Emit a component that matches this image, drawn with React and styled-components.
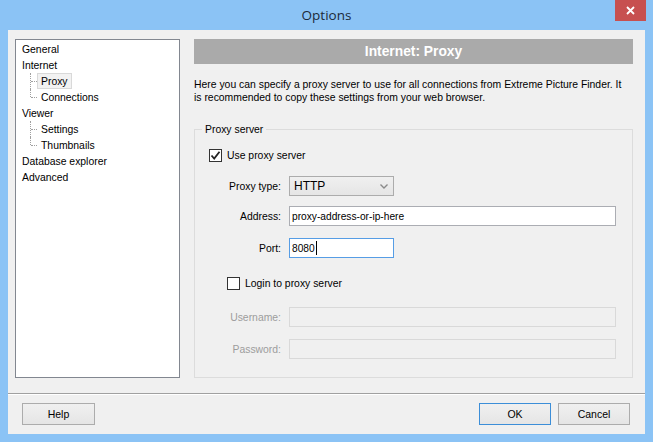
import React from "react";
import styled, { createGlobalStyle } from "styled-components";

const GlobalStyle = createGlobalStyle`
  html, body { margin: 0; padding: 0; background: #8bc3f5; }
  body { font-family: "Liberation Sans", Arial, sans-serif; font-size: 10.4px; color: #000; }
  * { box-sizing: border-box; }
`;

const Window = styled.div`
  width: 653px;
  height: 442px;
  background: #8bc3f5;
  display: flex;
  flex-direction: column;
`;

const TitleBar = styled.div`
  height: 30px;
  display: grid;
  grid-template-columns: 1fr auto 1fr;
  align-items: start;
`;

const Title = styled.div`
  grid-column: 2;
  font-family: "Open Sans", "Noto Sans", sans-serif;
  font-size: 13.5px;
  line-height: 30px;
  color: #1b2a3a;
`;

const CloseButton = styled.div`
  grid-column: 3;
  justify-self: end;
  margin-right: 7px;
  width: 31px;
  height: 21px;
  background: #c75050;
  display: flex;
  align-items: center;
  justify-content: center;
`;

const Client = styled.div`
  flex: 1;
  margin: 0 8px 8px 8px;
  background: #f0f0f0;
  display: flex;
  flex-direction: column;
`;

const Main = styled.div`
  display: flex;
  gap: 14px;
  padding: 9px 12px 0 7px;
  height: 348px;
`;

const Tree = styled.div`
  width: 165px;
  height: 339px;
  background: #fff;
  border: 1px solid #828790;
  padding-top: 1px;
`;

const TreeRow = styled.div`
  position: relative;
  height: 16px;
  display: flex;
  align-items: center;
  padding-left: ${(p) => (p.$level ? 21 : 2)}px;

  ${(p) =>
    p.$level
      ? `
    &::before {
      content: "";
      position: absolute;
      left: 14px;
      top: 0;
      height: ${p.$last ? "8px" : "16px"};
      border-left: 1px dotted #a0a0a0;
    }
    &::after {
      content: "";
      position: absolute;
      left: 15px;
      top: 8px;
      width: 6px;
      border-top: 1px dotted #a0a0a0;
    }
  `
      : ""}
`;

const TreeLabel = styled.span`
  display: inline-flex;
  align-items: center;
  height: 16px;
  padding: 0 3px;
  border: 1px solid ${(p) => (p.$selected ? "#d9d9d9" : "transparent")};
  background: ${(p) => (p.$selected ? "#f2f2f2" : "transparent")};
  white-space: nowrap;
`;

const Panel = styled.div`
  width: 439px;
  height: 339px;
  display: flex;
  flex-direction: column;
`;

const Header = styled.div`
  height: 25px;
  background: #aaaaaa;
  color: #fff;
  font-weight: bold;
  font-size: 13.8px;
  display: flex;
  align-items: center;
  justify-content: center;
`;

const Description = styled.p`
  margin: 14px 0 0 0;
  line-height: 13px;
  white-space: nowrap;
`;

const GroupBox = styled.fieldset`
  flex: 1;
  min-width: 0;
  margin: 19px 0 0 0;
  padding: 0;
  border: 1px solid #dcdcdc;
  display: flex;
  flex-direction: column;
`;

const Legend = styled.legend`
  margin-left: 7px;
  padding: 0 3px;
  line-height: 13px;
`;

const GroupBody = styled.div`
  padding: 13px 0 0 14px;
  display: flex;
  flex-direction: column;
`;

const CheckRow = styled.label`
  display: flex;
  align-items: center;
  gap: 5px;
  height: 13px;
  margin-top: ${(p) => p.$mt || 0}px;
  margin-left: ${(p) => p.$indent || 0}px;
  white-space: nowrap;
`;

const Box = styled.span`
  width: 13px;
  height: 13px;
  border: 1px solid #333;
  background: #fff;
  display: flex;
  align-items: center;
  justify-content: center;
  flex: none;
`;

const FieldRow = styled.div`
  display: grid;
  grid-template-columns: 72px auto;
  column-gap: 8px;
  align-items: center;
  margin-top: ${(p) => p.$mt}px;
`;

const FieldLabel = styled.span`
  text-align: right;
  color: ${(p) => (p.$disabled ? "#9d9d9d" : "#000")};
  white-space: nowrap;
`;

const TextBox = styled.div`
  width: ${(p) => p.$w}px;
  height: 20px;
  border: 1px solid
    ${(p) => (p.$focused ? "#569de5" : p.$disabled ? "#d9d9d9" : "#abadb3")};
  background: ${(p) => (p.$disabled ? "#f0f0f0" : "#fff")};
  display: flex;
  align-items: center;
  padding-left: 2px;
  font-size: 10.2px;
  white-space: nowrap;
`;

const Caret = styled.span`
  width: 1px;
  height: 14px;
  background: #000;
  margin-left: 1px;
`;

const Select = styled.div`
  width: 105px;
  height: 20px;
  border: 1px solid #acacac;
  background: linear-gradient(#f0f0f0, #e5e5e5);
  display: flex;
  align-items: center;
  justify-content: space-between;
  padding: 0 5px 0 4px;
  font-size: 12px;
`;

const Separator = styled.div`
  margin-top: 15px;
  height: 2px;
  border-top: 1px solid #a0a0a0;
  border-bottom: 1px solid #ffffff;
`;

const Footer = styled.div`
  display: flex;
  align-items: center;
  padding: 8px 15px 0 14px;
  gap: 7px;
`;

const Button = styled.button`
  width: ${(p) => p.$w || 72}px;
  height: 22px;
  font-family: "Liberation Sans", Arial, sans-serif;
  font-size: 10.5px;
  color: #000;
  background: linear-gradient(#f0f0f0, #e5e5e5);
  border: 1px solid ${(p) => (p.$default ? "#3c8ed8" : "#acacac")};
  margin-right: ${(p) => (p.$push ? "auto" : "0")};
  padding: 0;
`;

const tree = [
  { label: "General", level: 0 },
  { label: "Internet", level: 0 },
  { label: "Proxy", level: 1, selected: true },
  { label: "Connections", level: 1, last: true },
  { label: "Viewer", level: 0 },
  { label: "Settings", level: 1 },
  { label: "Thumbnails", level: 1, last: true },
  { label: "Database explorer", level: 0 },
  { label: "Advanced", level: 0 },
];

const Check = () => (
  <svg width="11" height="11" viewBox="0 0 11 11">
    <path d="M1.5 5.5 L4.2 8.5 L9.5 1.8" fill="none" stroke="#222" strokeWidth="1.8" />
  </svg>
);

export default function App() {
  return (
    <>
      <GlobalStyle />
      <Window>
        <TitleBar>
          <Title>Options</Title>
          <CloseButton>
            <svg width="9" height="9" viewBox="0 0 9 9">
              <path d="M1 1 L8 8 M8 1 L1 8" stroke="#fff" strokeWidth="1.8" />
            </svg>
          </CloseButton>
        </TitleBar>
        <Client>
          <Main>
            <Tree>
              {tree.map((t) => (
                <TreeRow key={t.label} $level={t.level} $last={t.last}>
                  <TreeLabel $selected={t.selected}>{t.label}</TreeLabel>
                </TreeRow>
              ))}
            </Tree>
            <Panel>
              <Header>Internet: Proxy</Header>
              <Description>
                Here you can specify a proxy server to use for all connections from Extreme Picture Finder. It
                <br />
                is recommended to copy these settings from your web browser.
              </Description>
              <GroupBox>
                <Legend>Proxy server</Legend>
                <GroupBody>
                  <CheckRow>
                    <Box>
                      <Check />
                    </Box>
                    Use proxy server
                  </CheckRow>
                  <FieldRow $mt={14}>
                    <FieldLabel>Proxy type:</FieldLabel>
                    <Select>
                      HTTP
                      <svg width="8" height="5" viewBox="0 0 8 5">
                        <path d="M0.5 0.5 L4 4 L7.5 0.5" fill="none" stroke="#8a8a8a" strokeWidth="1.4" />
                      </svg>
                    </Select>
                  </FieldRow>
                  <FieldRow $mt={10}>
                    <FieldLabel>Address:</FieldLabel>
                    <TextBox $w={327}>proxy-address-or-ip-here</TextBox>
                  </FieldRow>
                  <FieldRow $mt={12}>
                    <FieldLabel>Port:</FieldLabel>
                    <TextBox $w={105} $focused>
                      8080
                      <Caret />
                    </TextBox>
                  </FieldRow>
                  <CheckRow $mt={19} $indent={18}>
                    <Box />
                    Login to proxy server
                  </CheckRow>
                  <FieldRow $mt={17}>
                    <FieldLabel $disabled>Username:</FieldLabel>
                    <TextBox $w={327} $disabled />
                  </FieldRow>
                  <FieldRow $mt={12}>
                    <FieldLabel $disabled>Password:</FieldLabel>
                    <TextBox $w={327} $disabled />
                  </FieldRow>
                </GroupBody>
              </GroupBox>
            </Panel>
          </Main>
          <Separator />
          <Footer>
            <Button $w={73} $push>Help</Button>
            <Button $default>OK</Button>
            <Button>Cancel</Button>
          </Footer>
        </Client>
      </Window>
    </>
  );
}
